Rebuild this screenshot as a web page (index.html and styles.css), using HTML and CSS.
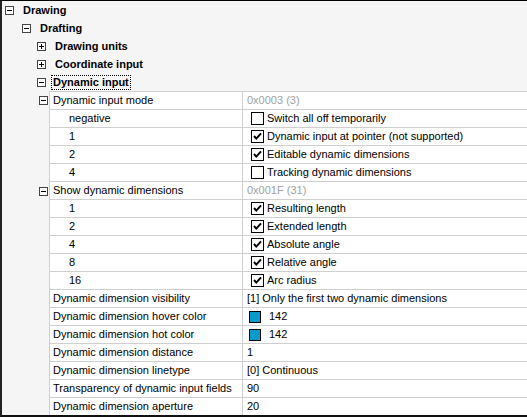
FILE: index.html
```html
<!DOCTYPE html>
<html>
<head>
<meta charset="utf-8">
<link rel="stylesheet" href="styles.css">
</head>
<body>
<div class="frame">
  <div class="node l0"><span class="exp minus"></span><span class="lbl">Drawing</span></div>
  <div class="node l1"><span class="exp minus"></span><span class="lbl">Drafting</span></div>
  <div class="node l2"><span class="exp plus"></span><span class="lbl">Drawing units</span></div>
  <div class="node l2"><span class="exp plus"></span><span class="lbl">Coordinate input</span></div>
  <div class="node l2"><span class="exp minus"></span><span class="lbl focus">Dynamic input</span></div>

  <div class="grid">
    <div class="row first">
      <div class="gutter"><span class="exp minus"></span></div>
      <div class="cells"><div class="name">Dynamic input mode</div><div class="val dim">0x0003 (3)</div></div>
    </div>
    <div class="row">
      <div class="gutter"></div>
      <div class="cells"><div class="name sub">negative</div><div class="val cbv"><span class="cb"></span>Switch all off temporarily</div></div>
    </div>
    <div class="row">
      <div class="gutter"></div>
      <div class="cells"><div class="name sub">1</div><div class="val cbv"><span class="cb on"><svg viewBox="0 0 11 11" width="11" height="11"><polyline points="2,5 4.3,7.6 9,2.4" fill="none" stroke="#000" stroke-width="2"/></svg></span>Dynamic input at pointer (not supported)</div></div>
    </div>
    <div class="row">
      <div class="gutter"></div>
      <div class="cells"><div class="name sub">2</div><div class="val cbv"><span class="cb on"><svg viewBox="0 0 11 11" width="11" height="11"><polyline points="2,5 4.3,7.6 9,2.4" fill="none" stroke="#000" stroke-width="2"/></svg></span>Editable dynamic dimensions</div></div>
    </div>
    <div class="row">
      <div class="gutter"></div>
      <div class="cells"><div class="name sub">4</div><div class="val cbv"><span class="cb"></span>Tracking dynamic dimensions</div></div>
    </div>
    <div class="row">
      <div class="gutter"><span class="exp minus"></span></div>
      <div class="cells"><div class="name">Show dynamic dimensions</div><div class="val dim">0x001F (31)</div></div>
    </div>
    <div class="row">
      <div class="gutter"></div>
      <div class="cells"><div class="name sub">1</div><div class="val cbv"><span class="cb on"><svg viewBox="0 0 11 11" width="11" height="11"><polyline points="2,5 4.3,7.6 9,2.4" fill="none" stroke="#000" stroke-width="2"/></svg></span>Resulting length</div></div>
    </div>
    <div class="row">
      <div class="gutter"></div>
      <div class="cells"><div class="name sub">2</div><div class="val cbv"><span class="cb on"><svg viewBox="0 0 11 11" width="11" height="11"><polyline points="2,5 4.3,7.6 9,2.4" fill="none" stroke="#000" stroke-width="2"/></svg></span>Extended length</div></div>
    </div>
    <div class="row">
      <div class="gutter"></div>
      <div class="cells"><div class="name sub">4</div><div class="val cbv"><span class="cb on"><svg viewBox="0 0 11 11" width="11" height="11"><polyline points="2,5 4.3,7.6 9,2.4" fill="none" stroke="#000" stroke-width="2"/></svg></span>Absolute angle</div></div>
    </div>
    <div class="row">
      <div class="gutter"></div>
      <div class="cells"><div class="name sub">8</div><div class="val cbv"><span class="cb on"><svg viewBox="0 0 11 11" width="11" height="11"><polyline points="2,5 4.3,7.6 9,2.4" fill="none" stroke="#000" stroke-width="2"/></svg></span>Relative angle</div></div>
    </div>
    <div class="row">
      <div class="gutter"></div>
      <div class="cells"><div class="name sub">16</div><div class="val cbv"><span class="cb on"><svg viewBox="0 0 11 11" width="11" height="11"><polyline points="2,5 4.3,7.6 9,2.4" fill="none" stroke="#000" stroke-width="2"/></svg></span>Arc radius</div></div>
    </div>
    <div class="row">
      <div class="gutter"></div>
      <div class="cells"><div class="name">Dynamic dimension visibility</div><div class="val">[1] Only the first two dynamic dimensions</div></div>
    </div>
    <div class="row">
      <div class="gutter"></div>
      <div class="cells"><div class="name">Dynamic dimension hover color</div><div class="val colv"><span class="swatch"></span>142</div></div>
    </div>
    <div class="row">
      <div class="gutter"></div>
      <div class="cells"><div class="name">Dynamic dimension hot color</div><div class="val colv"><span class="swatch"></span>142</div></div>
    </div>
    <div class="row">
      <div class="gutter"></div>
      <div class="cells"><div class="name">Dynamic dimension distance</div><div class="val">1</div></div>
    </div>
    <div class="row">
      <div class="gutter"></div>
      <div class="cells"><div class="name">Dynamic dimension linetype</div><div class="val">[0] Continuous</div></div>
    </div>
    <div class="row">
      <div class="gutter"></div>
      <div class="cells"><div class="name">Transparency of dynamic input fields</div><div class="val">90</div></div>
    </div>
    <div class="row">
      <div class="gutter"></div>
      <div class="cells"><div class="name">Dynamic dimension aperture</div><div class="val">20</div></div>
    </div>
  </div>
</div>
</body>
</html>
```

FILE: styles.css
```css
html, body {
  margin: 0;
  padding: 0;
  background: #f0f0f0;
}
.frame {
  box-sizing: border-box;
  width: 527px;
  height: 417px;
  overflow: hidden;
  background: #f5f5f5;
  border-top: 1px solid #000;
  border-left: 2px solid #222;
  border-bottom: 2px solid #111;
  font-family: "Liberation Sans", Arial, sans-serif;
  font-size: 11px;
  color: #000;
}
.node {
  height: 18px;
  display: flex;
  align-items: center;
  font-weight: bold;
}
.l0 { padding-left: 3px; }
.l1 { padding-left: 20px; }
.l2 { padding-left: 35px; }
.node .exp { margin-right: 7px; }
.lbl { line-height: 13px; padding: 0 1px; border: 1px solid transparent; }
.focus { border: 1px dotted #000; margin-left: -2px; }

.exp {
  box-sizing: border-box;
  width: 9px;
  height: 9px;
  border: 1px solid #444;
  background: #fff;
  position: relative;
  flex: none;
}
.exp::before {
  content: "";
  position: absolute;
  left: 1px;
  top: 3px;
  width: 5px;
  height: 1px;
  background: #000;
}
.plus::after {
  content: "";
  position: absolute;
  left: 3px;
  top: 1px;
  width: 1px;
  height: 5px;
  background: #000;
}

.row {
  display: flex;
  height: 18px;
}
.gutter {
  box-sizing: border-box;
  width: 47px;
  flex: none;
  display: flex;
  align-items: center;
  justify-content: flex-end;
  padding-right: 1px;
}
.cells {
  flex: 1;
  display: flex;
  border-bottom: 1px solid #cfcfcf;
  background: #fff;
}
.first .cells { border-top: 1px solid #cfcfcf; }
.first { height: 19px; }
.name {
  box-sizing: border-box;
  width: 193px;
  flex: none;
  border-left: 1px solid #cfcfcf;
  padding-left: 3px;
  line-height: 17px;
  white-space: nowrap;
  overflow: hidden;
}
.name.sub { padding-left: 19px; }
.val {
  flex: 1;
  border-left: 1px solid #cfcfcf;
  padding-left: 4px;
  line-height: 17px;
  white-space: nowrap;
  display: flex;
  align-items: center;
}
.dim { color: #a0a0a0; }
.cbv { padding-left: 8px; }
.cb {
  box-sizing: border-box;
  width: 13px;
  height: 13px;
  border: 1px solid #000;
  background: #fff;
  margin-right: 3px;
  display: flex;
  align-items: center;
  justify-content: center;
  flex: none;
}
.colv { padding-left: 6px; }
.swatch {
  box-sizing: border-box;
  width: 12px;
  height: 12px;
  border: 1px solid #000;
  background: #0a9bcc;
  margin-right: 8px;
  flex: none;
}
```
